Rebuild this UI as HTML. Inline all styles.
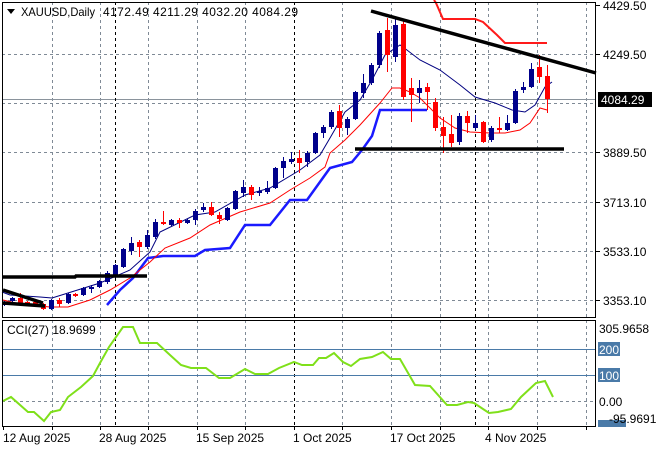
<!DOCTYPE html>
<html><head><meta charset="utf-8"><style>
html,body{margin:0;padding:0;background:#fff;}
svg{display:block;font-family:"Liberation Sans",sans-serif;font-size:12px;}
</style></head><body>
<svg id="s" width="660" height="450" xmlns="http://www.w3.org/2000/svg">
<rect width="660" height="450" fill="#fff"/>
<g id="grid" stroke="#7f8a96" stroke-width="1" stroke-dasharray="3,3" fill="none"></g>
<line x1="2" y1="99.5" x2="595" y2="99.5" stroke="#8a939c" stroke-width="1"/>
<g stroke="#000" stroke-width="1" stroke-dasharray="3,3">
<line x1="115.5" y1="2" x2="115.5" y2="318"/><line x1="294.5" y1="2" x2="294.5" y2="318"/><line x1="475.5" y1="2" x2="475.5" y2="318"/>
<line x1="115.5" y1="320" x2="115.5" y2="426"/><line x1="294.5" y1="320" x2="294.5" y2="426"/><line x1="475.5" y1="320" x2="475.5" y2="426"/>
</g>
<polyline fill="none" stroke="#1a1aff" stroke-width="2.5" points="107,305 120,290 133,278 148,258 163,256 195,256 205,250 230,248 245,225 270,225 290,200 307,200 330,168 352,162 362,150 372,136 380,110 427,110"/>
<polyline fill="none" stroke="#ff1a1a" stroke-width="2" points="434,0 436,3 443,19 475,19 483,22 497,35 505,43 547,43"/>
<polyline fill="none" stroke="#000080" stroke-width="1" points="2,292 10,295 40,297 52,298 68,293 100,283 130,270 150,252 160,232 195,215 215,212 245,195 270,188 300,170 320,155 330,138 345,112 360,100 372,80 385,55 400,45 403,47 420,60 440,70 460,85 475,97 495,103 512,110 525,112 535,105 545,87 552,82"/>
<polyline fill="none" stroke="#ff0000" stroke-width="1" points="3,300 20,304 50,307 68,307 90,300 110,290 130,278 150,262 165,248 190,238 210,225 240,212 270,203 290,190 310,178 325,167 330,153 345,140 360,125 380,103 392,88 400,88 410,92 420,98 440,118 455,128 470,132 490,133 505,133 520,130 530,123 540,108 547,110"/>
<g id="candles"></g>
<g stroke="#000" stroke-width="3.5" fill="none">
<line x1="371" y1="11" x2="596" y2="73"/>
<line x1="355" y1="149" x2="564" y2="149"/>
<polyline points="3,277 75,277 76,276 147,276"/>
<line x1="3" y1="290" x2="43" y2="303"/>
<line x1="3" y1="303" x2="45" y2="306"/>
</g>
<line x1="2" y1="349.5" x2="595" y2="349.5" stroke="#4a7aa8"/>
<line x1="2" y1="375.5" x2="595" y2="375.5" stroke="#4a7aa8"/>
<line x1="2" y1="401.5" x2="595" y2="401.5" stroke="#7f8a96" stroke-dasharray="3,3"/>
<polyline fill="none" stroke="#7fe01a" stroke-width="2" points="3,401 11,397 28,412 34,412 44,421 51,412 60,410 68,397 81,387 93,376 100,363 109,347 123,327 133,327 140,343 157,343 170,355 181,365 191,368 206,368 219,378 230,378 245,369 255,374 268,374 279,368 294,362 302,365 313,365 319,358 326,358 334,353 343,362 351,366 360,359 372,357 383,352 391,359 400,359 415,385 430,386 447,405 457,405 468,402 474,403 489,413 498,412 511,409 521,397 536,383 545,381 553,397"/>
<rect x="2.5" y="2.5" width="593" height="315" fill="none" stroke="#000"/>
<rect x="2.5" y="320.5" width="593" height="106" fill="none" stroke="#000"/>
<path d="M7,9 L15,9 L11,14 Z" fill="#000"/>
<text x="21" y="16" textLength="74" lengthAdjust="spacingAndGlyphs">XAUUSD,Daily</text>
<text x="103" y="16" textLength="195" lengthAdjust="spacing">4172.49 4211.29 4032.20 4084.29</text>
<text x="7" y="334">CCI(27) 18.9699</text>
<g fill="#000">
<text x="603" y="10">4429.50</text>
<text x="603" y="59">4249.50</text>
<text x="603" y="157">3889.50</text>
<text x="603" y="207">3713.10</text>
<text x="603" y="256">3533.10</text>
<text x="603" y="305">3353.10</text>
</g>
<g stroke="#000"><line x1="595" y1="5.5" x2="600" y2="5.5"/><line x1="595" y1="54.5" x2="600" y2="54.5"/><line x1="595" y1="152.5" x2="600" y2="152.5"/><line x1="595" y1="202.5" x2="600" y2="202.5"/><line x1="595" y1="251.5" x2="600" y2="251.5"/><line x1="595" y1="300.5" x2="600" y2="300.5"/></g>
<rect x="598" y="92" width="54" height="15" fill="#000"/>
<text x="601" y="104" fill="#fff">4084.29</text>
<text x="599" y="333">305.9658</text>
<rect x="598" y="342" width="22" height="14" fill="#4a7aa8"/><text x="599" y="354" fill="#fff">200</text>
<rect x="598" y="368" width="22" height="14" fill="#4a7aa8"/><text x="599" y="380" fill="#fff">100</text>
<text x="599" y="406">0.00</text>
<rect x="598" y="420" width="28" height="7" fill="#4a7aa8"/>
<text x="609" y="423">-95.9691</text>
<g fill="#000">
<text x="3" y="442">12 Aug 2025</text>
<text x="99" y="442">28 Aug 2025</text>
<text x="196" y="442">15 Sep 2025</text>
<text x="293" y="442">1 Oct 2025</text>
<text x="390" y="442">17 Oct 2025</text>
<text x="485" y="442">4 Nov 2025</text>
</g>
<g id="ticks" stroke="#000"></g>
</svg>
<script>
var ns="http://www.w3.org/2000/svg";
function el(t,a,p){var e=document.createElementNS(ns,t);for(var k in a)e.setAttribute(k,a[k]);document.getElementById(p).appendChild(e);}
var gx=[52,100,148,197,245,342,391,440,488,537,586];
gx.forEach(function(x){el("line",{x1:x+.5,y1:2,x2:x+.5,y2:318},"grid");el("line",{x1:x+.5,y1:320,x2:x+.5,y2:426},"grid");});
[54,103,152,202,251,300].forEach(function(y){el("line",{x1:2,y1:y+.5,x2:595,y2:y+.5},"grid");});
[3,52,100,148,197,245,294,342,391,440,488,537,586].forEach(function(x){el("line",{x1:x+.5,y1:426,x2:x+.5,y2:430},"ticks");});
var B="#00008b",R="#ff0000";
var c=[[4,B,302,305],[12,B,298,301],[20,R,298,304,293,306],[27,R,302,305],[35,R,302,305],[43,R,304,309],[51,B,300,309],[59,R,300,304,298,307],[68,B,294,303],[75,R,294,296],[83,B,288,295],[91,B,287,288,285,293],[99,B,281,287],[107,B,273,282,271,284],[115,B,265,277],[123,B,249,267],[131,B,243,251,237,255],[139,R,242,247,240,257],[147,B,235,247,230,249],[155,B,222,237,219,239],[163,R,222,224,211,225],[171,B,220,225],[179,R,220,223,218,228],[187,B,220,223],[195,B,211,220,209,225],[203,B,207,210,203,212],[211,R,207,215,202,216],[219,R,215,219,212,224],[227,B,208,220],[235,B,191,209],[243,B,187,193,180,197],[251,R,187,195,185,200],[259,B,191,193,187,196],[267,B,188,192,181,194],[275,B,168,188],[283,B,161,168,157,178],[291,B,159,162,152,164],[299,R,158,163,150,173],[307,B,153,162,151,167],[315,B,133,153],[323,B,127,133,125,138],[331,B,112,127,110,129],[339,R,111,128,105,137],[347,B,119,128,117,135],[355,B,92,119],[363,B,83,93,74,98],[371,B,65,83,63,85],[379,B,33,65,31,68],[387,R,30,55,18,72],[395,B,25,57,18,62],[403,R,24,97,20,100],[411,R,88,95,78,122],[419,B,88,93,80,103],[427,R,87,92,83,110],[435,R,102,128,98,131],[443,R,127,136,117,153],[451,R,134,143,115,147],[459,B,116,142,113,145],[467,R,116,123,111,133],[475,B,123,128,115,130],[483,R,122,142,121,143],[491,B,128,140,126,142],[499,R,128,129,117,133],[507,B,123,130,115,131],[515,B,91,123,89,124],[523,B,87,90,82,93],[531,B,69,87,63,88],[539,R,67,77,55,83],[547,R,76,99,65,113]];
c.forEach(function(d){var x=d[0],wt=d[4]||d[2]-1,wb=d[5]||d[3]+1;
el("line",{x1:x+.5,y1:wt,x2:x+.5,y2:wb,stroke:d[1]},"candles");
el("rect",{x:x-2,y:d[2],width:5,height:Math.max(2,d[3]-d[2]),fill:d[1]},"candles");});
</script>
</body></html>
